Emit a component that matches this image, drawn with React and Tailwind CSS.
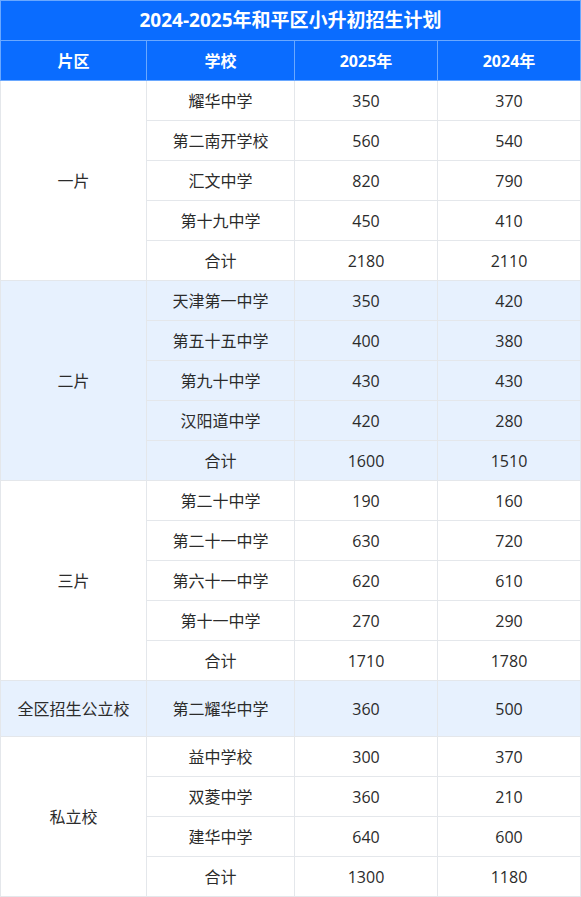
const groups = [
  {
    name: '一片',
    tint: false,
    rows: [
      ['耀华中学', '350', '370'],
      ['第二南开学校', '560', '540'],
      ['汇文中学', '820', '790'],
      ['第十九中学', '450', '410'],
      ['合计', '2180', '2110'],
    ],
  },
  {
    name: '二片',
    tint: true,
    rows: [
      ['天津第一中学', '350', '420'],
      ['第五十五中学', '400', '380'],
      ['第九十中学', '430', '430'],
      ['汉阳道中学', '420', '280'],
      ['合计', '1600', '1510'],
    ],
  },
  {
    name: '三片',
    tint: false,
    rows: [
      ['第二十中学', '190', '160'],
      ['第二十一中学', '630', '720'],
      ['第六十一中学', '620', '610'],
      ['第十一中学', '270', '290'],
      ['合计', '1710', '1780'],
    ],
  },
  {
    name: '全区招生公立校',
    tint: true,
    tall: true,
    rows: [['第二耀华中学', '360', '500']],
  },
  {
    name: '私立校',
    tint: false,
    rows: [
      ['益中学校', '300', '370'],
      ['双菱中学', '360', '210'],
      ['建华中学', '640', '600'],
      ['合计', '1300', '1180'],
    ],
  },
]

const cell = 'border border-[#e4e7eb] text-center align-middle p-0'

export default function App() {
  return (
    <div
      className="w-[581px] bg-white text-[16px] text-[#2b2b2b]"
      style={{ fontFamily: '"Open Sans", "Noto Sans CJK SC", sans-serif' }}
    >
      <table className="w-full table-fixed border-collapse">
        <colgroup>
          <col className="w-[146px]" />
          <col className="w-[148px]" />
          <col className="w-[143px]" />
          <col />
        </colgroup>
        <thead>
          <tr className="h-10 bg-[#0a6cff] text-white">
            <th colSpan={4} className="border border-[#6aa8ff] text-[19px] font-bold align-middle">
              2024-2025年和平区小升初招生计划
            </th>
          </tr>
          <tr className="h-10 bg-[#0a6cff] text-white">
            {['片区', '学校', '2025年', '2024年'].map((h) => (
              <th key={h} className="border border-[#6aa8ff] text-[16px] font-bold align-middle">
                {h}
              </th>
            ))}
          </tr>
        </thead>
        <tbody>
          {groups.map((g) =>
            g.rows.map((r, i) => (
              <tr
                key={g.name + r[0]}
                className={`${g.tall ? 'h-14' : 'h-10'} ${g.tint ? 'bg-[#e7f1fe]' : 'bg-white'}`}
              >
                {i === 0 && (
                  <td rowSpan={g.rows.length} className={cell}>
                    {g.name}
                  </td>
                )}
                <td className={cell}>{r[0]}</td>
                <td className={cell}>{r[1]}</td>
                <td className={cell}>{r[2]}</td>
              </tr>
            ))
          )}
        </tbody>
      </table>
    </div>
  )
}
